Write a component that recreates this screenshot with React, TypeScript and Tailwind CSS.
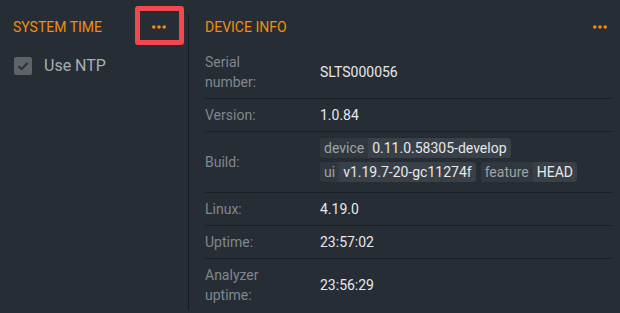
import React from "react";

function Dots() {
  return (
    <svg width="14" height="4" viewBox="0 0 14 4" className="block">
      <circle cx="1.8" cy="2" r="1.8" fill="#ef8d12" />
      <circle cx="7" cy="2" r="1.8" fill="#ef8d12" />
      <circle cx="12.2" cy="2" r="1.8" fill="#ef8d12" />
    </svg>
  );
}

function Tag({ k, v }: { k: string; v: string }) {
  return (
    <span className="flex h-[20px] leading-[20px] text-[14px]">
      <span className="px-[4px] bg-[#31373e] text-[#9ea3a9] rounded-l-[3px]">{k}</span>
      <span className="px-[4px] bg-[#3a4047] text-[#e6e8eb] rounded-r-[3px]">{v}</span>
    </span>
  );
}

const rows: { label: React.ReactNode; value: React.ReactNode }[] = [
  { label: <>Serial<br />number:</>, value: "SLTS000056" },
  { label: "Version:", value: "1.0.84" },
  {
    label: "Build:",
    value: (
      <div className="flex flex-wrap gap-x-[5px] gap-y-[4px] pb-[4px]">
        <Tag k="device" v="0.11.0.58305-develop" />
        <Tag k="ui" v="v1.19.7-20-gc11274f" />
        <Tag k="feature" v="HEAD" />
      </div>
    ),
  },
  { label: "Linux:", value: "4.19.0" },
  { label: "Uptime:", value: "23:57:02" },
  { label: <>Analyzer<br />uptime:</>, value: "23:56:29" },
];

export default function App() {
  return (
    <div className="w-[620px] h-[313px] bg-[#272d35] flex overflow-hidden font-['Roboto',sans-serif]">
      {/* System time panel */}
      <div className="w-[188px] shrink-0 flex flex-col">
        <div className="h-[46px] pt-[8px] pl-[13px] pr-[22px] flex items-center justify-between">
          <span className="text-[14px] text-[#ef8d12] tracking-normal">SYSTEM TIME</span>
          <div className="relative w-[14px] h-[14px] flex items-center justify-center">
            <Dots />
            <div className="absolute left-[-17px] top-[-14px] w-[49px] h-[39px] border-[5px] border-[#f5474f] rounded-[3px]" />
          </div>
        </div>
        <div className="mt-[11px] pl-[14px] flex items-center gap-[12px]">
          <span className="w-[18px] h-[18px] rounded-[2px] bg-[#5e636a] flex items-center justify-center">
            <svg width="14" height="14" viewBox="0 0 14 14">
              <path d="M2.5 7.2 L5.6 10.2 L11.6 4" fill="none" stroke="#2a2f36" strokeWidth="2" />
            </svg>
          </span>
          <span className="text-[16px] leading-[18px] text-[#a8adb3]">Use NTP</span>
        </div>
      </div>

      {/* Divider */}
      <div className="w-px h-[296px] mt-[14px] bg-[#171c22] shrink-0" />

      {/* Device info panel */}
      <div className="flex-1 pl-[16px] pr-[7px] flex flex-col">
        <div className="h-[46px] pt-[8px] pr-[6px] flex items-center justify-between">
          <span className="text-[14px] text-[#ef8d12]">DEVICE INFO</span>
          <Dots />
        </div>
        <div className="flex flex-col">
          {rows.map((r, i) => (
            <div
              key={i}
              className={`flex items-center py-[6px] ${i < rows.length - 1 ? "border-b border-[#1b2026]" : ""}`}
            >
              <div className="w-[115px] shrink-0 text-[14px] leading-[20px] text-[#80878f]">{r.label}</div>
              <div className="flex-1 text-[14px] leading-[20px] text-[#e6e8eb]">{r.value}</div>
            </div>
          ))}
        </div>
      </div>
    </div>
  );
}
